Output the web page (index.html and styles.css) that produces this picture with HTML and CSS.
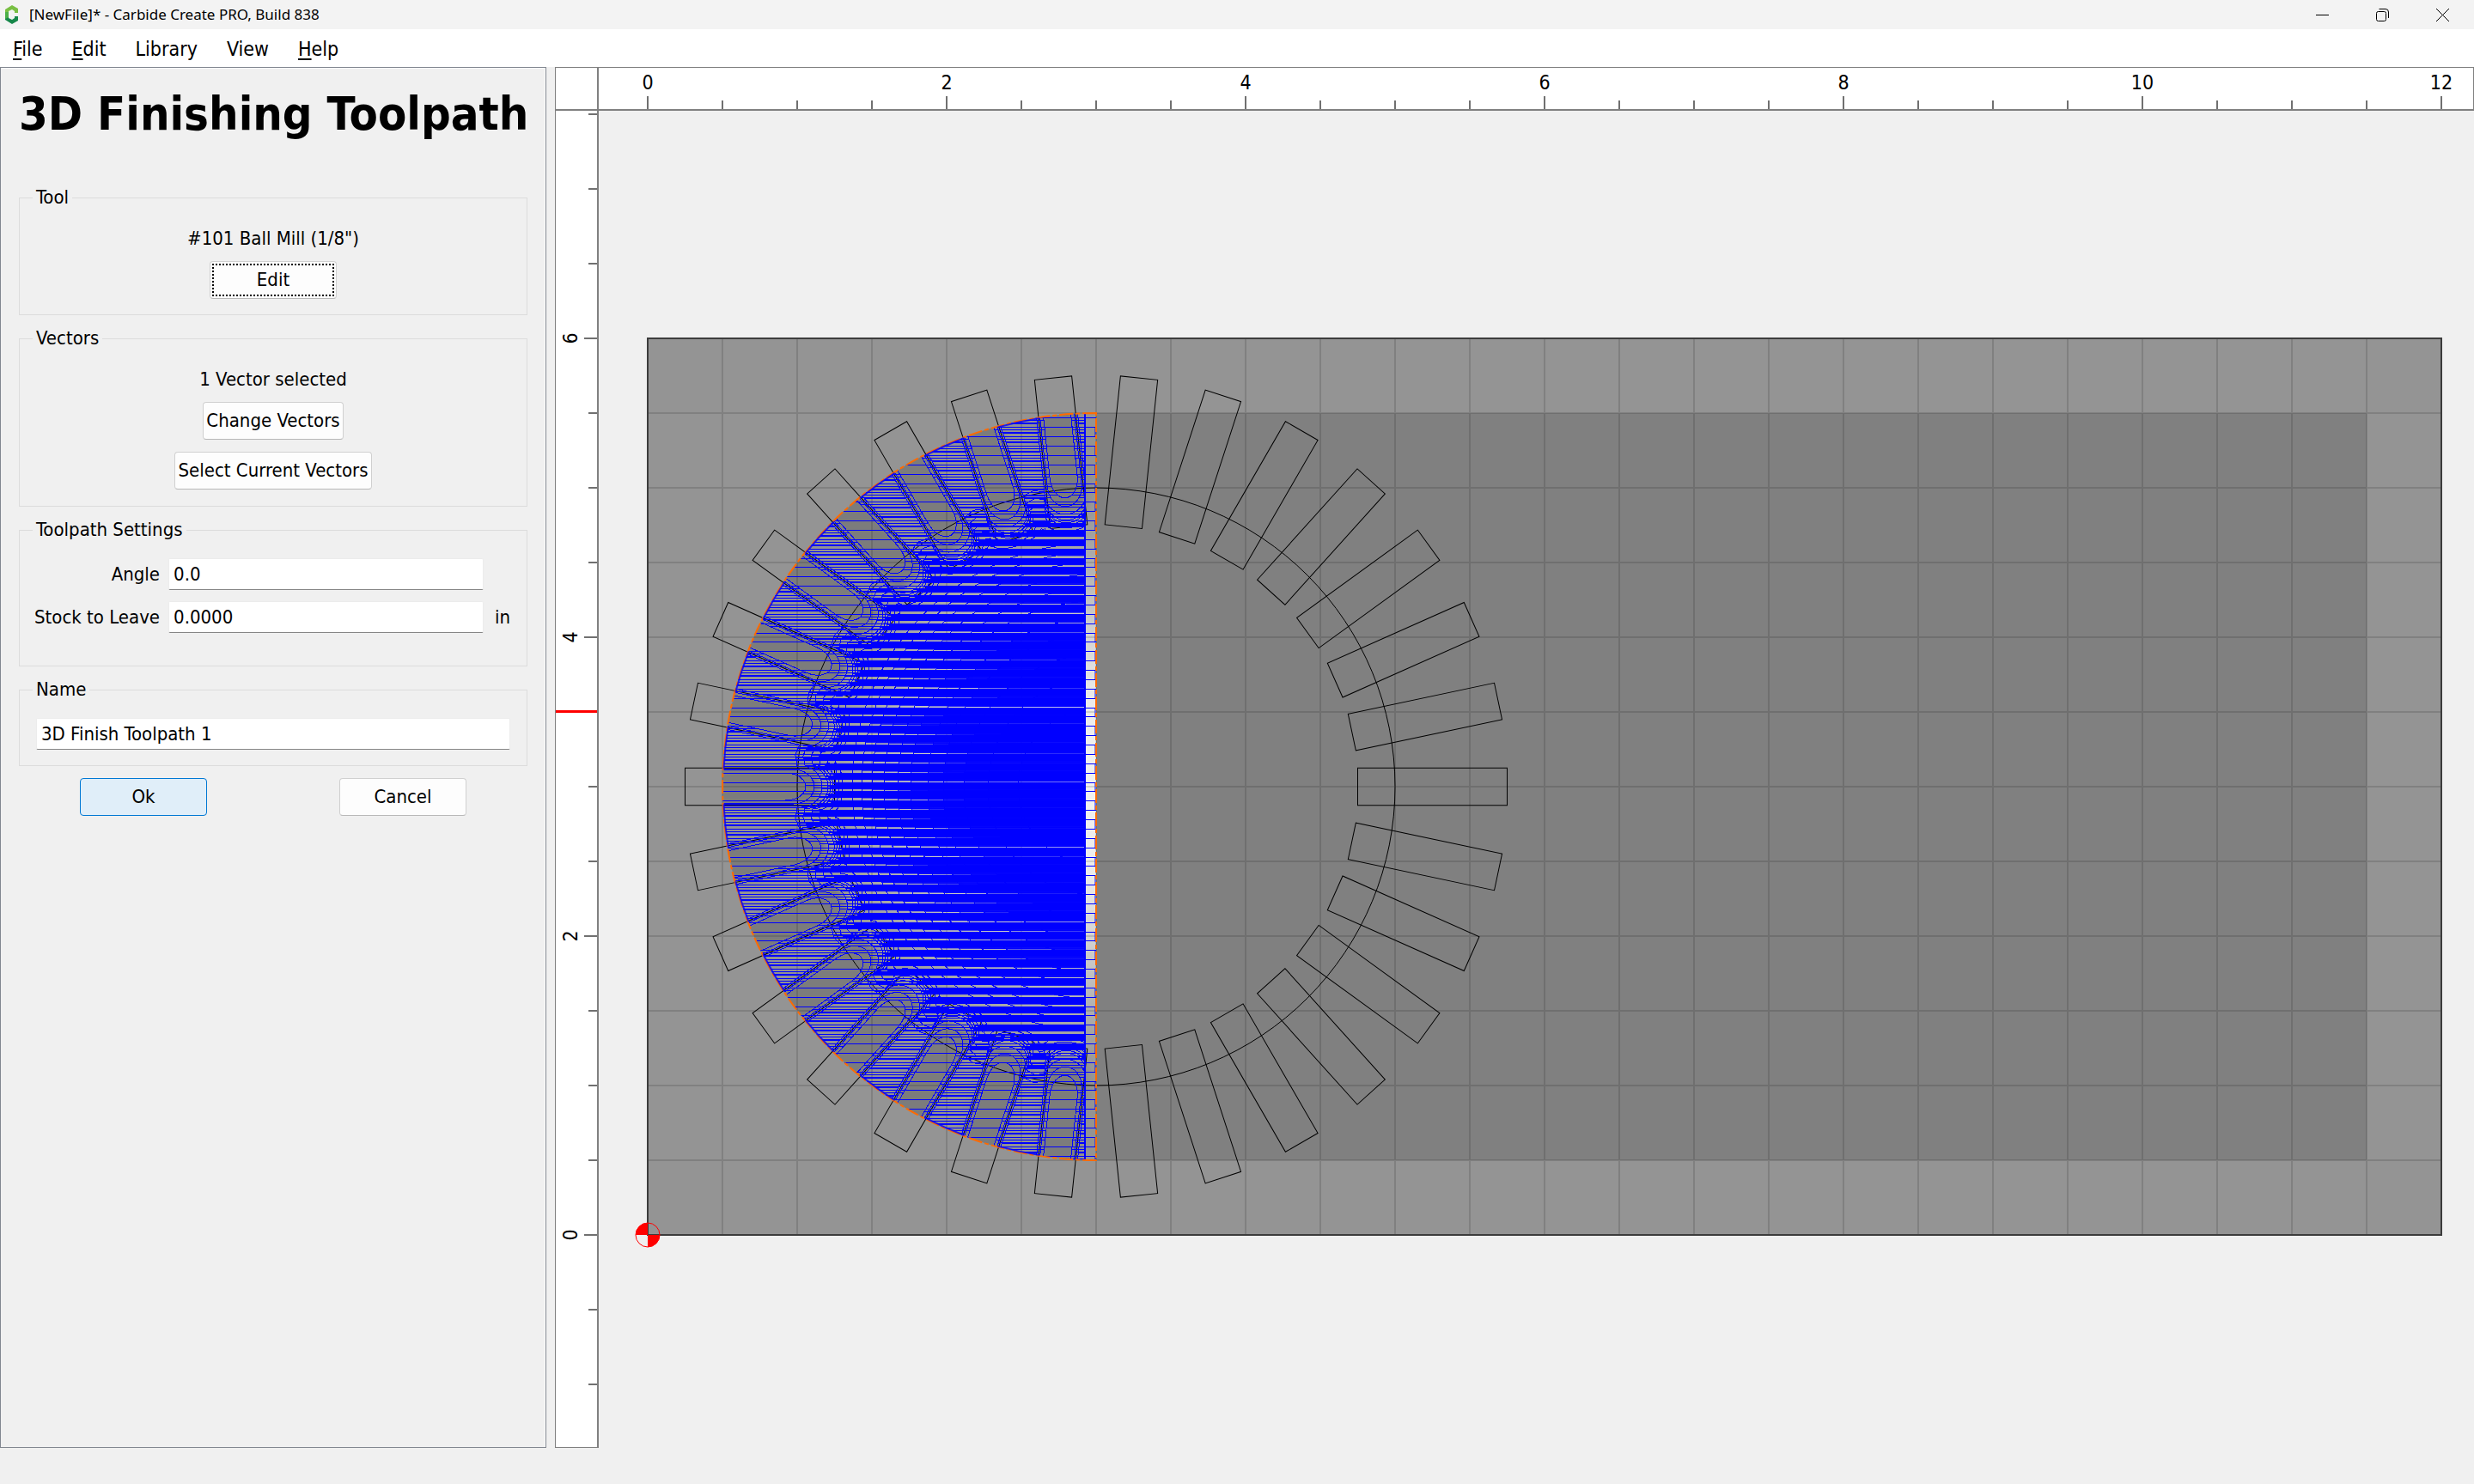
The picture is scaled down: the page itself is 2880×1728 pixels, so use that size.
FILE: index.html
```html
<!DOCTYPE html>
<html lang="en">
<head>
<meta charset="utf-8">
<title>[NewFile]* - Carbide Create PRO, Build 838</title>
<link rel="stylesheet" href="styles.css">
</head>
<body>
<div class="app">
  <header class="titlebar">
    <svg class="logo" width="18" height="26" viewBox="0 0 18 26" aria-hidden="true">
      <path d="M1 7 9 2l7 4v5h-4V9L9 7 5 9v5H1z" fill="#79bf43"/>
      <path d="M1 12h4v5l4 2 3-2v-2h4v5l-7 4-8-5z" fill="#16874a"/>
      <path d="M1 10h4v6l-4 2z" fill="#4caf48"/>
    </svg>
    <span class="title">[NewFile]* - Carbide Create PRO, Build 838</span>
    <div class="window-controls">
      <button class="window-btn" aria-label="Minimize"><svg width="17" height="17"><path d="M1 8.5h15" /></svg></button>
      <button class="window-btn" aria-label="Restore"><svg width="17" height="17"><rect x="1.500" y="4.500" width="11" height="11" rx="2"/><path d="M4.500 1.500H12a3.500 3.500 0 0 1 3.500 3.500v7"/></svg></button>
      <button class="window-btn" aria-label="Close"><svg width="17" height="17"><path d="M1 1l15 15M16 1 1 16"/></svg></button>
    </div>
  </header>

  <nav class="menubar">
    <a class="menu" href="#"><u>F</u>ile</a>
    <a class="menu" href="#"><u>E</u>dit</a>
    <a class="menu" href="#">Library</a>
    <a class="menu" href="#">View</a>
    <a class="menu" href="#"><u>H</u>elp</a>
  </nav>

  <main class="workspace">
    <form class="panel">
      <h1 class="heading">3D Finishing Toolpath</h1>

      <fieldset class="group tool">
        <legend>Tool</legend>
        <p class="note">#101 Ball Mill (1/8")</p>
        <button type="button" class="btn focused">Edit</button>
      </fieldset>

      <fieldset class="group vectors">
        <legend>Vectors</legend>
        <p class="note">1 Vector selected</p>
        <button type="button" class="btn snug">Change Vectors</button>
        <button type="button" class="btn snug">Select Current Vectors</button>
      </fieldset>

      <fieldset class="group settings">
        <legend>Toolpath Settings</legend>
        <div class="fields">
          <label for="angle">Angle</label>
          <input id="angle" class="field" type="text" value="0.0">
          <span></span>
          <label for="stock">Stock to Leave</label>
          <input id="stock" class="field" type="text" value="0.0000">
          <span class="unit">in</span>
        </div>
      </fieldset>

      <fieldset class="group name">
        <legend>Name</legend>
        <input class="field" type="text" value="3D Finish Toolpath 1" aria-label="Name">
      </fieldset>

      <div class="actions">
        <button type="button" class="btn primary">Ok</button>
        <button type="button" class="btn">Cancel</button>
      </div>
    </form>

    <section class="design">
      <div class="corner"></div>
      <svg class="ruler-x" id="ruler-x"></svg>
      <svg class="ruler-y" id="ruler-y"></svg>
      <svg class="stage" id="stage"></svg>
    </section>
  </main>
  <footer class="statusbar"></footer>
</div>
<script src="design.js"></script>
</body>
</html>
```
FILE: styles.css
```css
* { box-sizing: border-box; }
body {
  margin: 0;
  background: #f0f0f0;
  color: #000;
  font: 22px/26px "DejaVu Sans Condensed", "DejaVu Sans", sans-serif;
}
.app { display: flex; flex-direction: column; height: 100vh; }

.titlebar {
  display: flex;
  align-items: center;
  height: 34px;
  padding: 0 2px 0 5px;
  background: #f3f3f3;
  font: 17px/24px "Noto Sans", sans-serif;
}
.title { flex: 1; padding-left: 11px; }
.window-controls { display: flex; }
.window-btn {
  display: grid;
  place-items: center;
  width: 70px;
  height: 34px;
  padding: 0;
  border: 0;
  background: none;
}
.window-btn svg { fill: none; stroke: #000; stroke-width: 1; }

.menubar {
  display: flex;
  align-items: center;
  gap: 34px;
  height: 44px;
  padding: 2px 0 0 15px;
  background: #fff;
  font-size: 23px;
}
.menu { color: #000; text-decoration: none; }
.menu u { text-decoration-thickness: 2px; text-underline-offset: 3px; }

.workspace { display: flex; flex: 1; gap: 10px; min-height: 0; }
.statusbar { height: 42px; }

.panel {
  display: flex;
  flex-direction: column;
  width: 636px;
  padding: 0 21px;
  border: 1px solid #828790;
  box-shadow: inset -1px 1px #fff;
}
.heading {
  margin: 21px 0 51px;
  font-size: 54px;
  line-height: 66px;
  font-weight: bold;
  white-space: nowrap;
}
.group {
  display: flex;
  flex-direction: column;
  align-items: center;
  margin: 0 0 14px;
  padding: 0 19px;
  border: 1px solid #dcdcdc;
  min-width: 0;
}
.group legend { margin-left: -4px; padding: 0 4px; }
.note { margin: 0 0 13px; }
.tool { height: 150px; padding-top: 22px; }
.vectors { height: 209px; padding-top: 22px; }
.vectors .btn { margin-bottom: 14px; }
.settings { height: 172px; padding-top: 20px; }
.name { height: 102px; padding-top: 20px; }

.btn {
  width: 148px;
  height: 44px;
  padding: 0;
  border: 1px solid #d0d0d0;
  border-bottom-color: #b8b8b8;
  border-radius: 4px;
  background: #fdfdfd;
  color: #000;
  font: inherit;
}
.snug { width: auto; padding: 0 3px; }
.focused { outline: 2px dotted #000; outline-offset: -5px; }
.primary { border-color: #0078d4; background: #e0eef9; }

.fields {
  display: grid;
  grid-template-columns: auto 1fr auto;
  gap: 13px 8px;
  width: 100%;
  align-items: center;
}
.fields label { padding-right: 2px; margin-left: -2px; text-align: right; }
.unit { padding-left: 5px; }
.field {
  width: 100%;
  height: 37px;
  padding: 0 5px;
  border: 1px solid #ececec;
  border-bottom: 1px solid #868686;
  border-radius: 2px;
  background: #fff;
  color: #000;
  font: inherit;
}
.actions { display: flex; justify-content: space-between; padding: 0 71px; }

.design {
  display: grid;
  flex: 1;
  grid-template: 51px 1fr / 51px 1fr;
  min-width: 0;
}
.design svg { display: block; width: 100%; height: 100%; overflow: hidden; }
.corner, .ruler-x, .ruler-y { background: #fff; }
.corner { border: 1px solid #808080; border-width: 1px 2px 2px 1px; }
.ruler-x { border: 1px solid #808080; border-width: 1px 1px 2px 0; }
.ruler-y { border: 1px solid #808080; border-width: 0 2px 1px 1px; }
.ruler-x, .ruler-y { font-size: 23px; text-anchor: middle; }
.tick { stroke: #707070; stroke-width: 2; }
.cursor { stroke: #f00; stroke-width: 3; }

.outline { fill: none; stroke: #3c3c3c; stroke-width: 2; }
.grid { fill: none; stroke: #000; stroke-opacity: 0.13; stroke-width: 2; }
.vector { fill: none; stroke: #000; stroke-width: 1; }
.boundary { fill: none; stroke: #ff6a00; stroke-width: 2; stroke-dasharray: 16 3 5 3; }
.path { fill: none; stroke: #00f; stroke-width: 1; }
.ring { shape-rendering: crispEdges; }
.edge { stroke-width: 2; }
```
FILE: design.js
```javascript
const NS = 'http://www.w3.org/2000/svg';
const INCH = 174;

function add(parent, tag, attrs, text) {
  const el = document.createElementNS(NS, tag);
  for (const key in attrs) el.setAttribute(key, attrs[key]);
  if (text !== undefined) el.textContent = text;
  parent.appendChild(el);
  return el;
}

/* Stage position of the stock's lower left corner. */
const OX = 57, OY = 1309;

/* Rulers: a tick every half inch, a label every two inches. */
const rx = document.getElementById('ruler-x');
for (let i = 0; i <= 24; i++) {
  const x = OX + i * INCH / 2;
  const major = i % 4 === 0;
  add(rx, 'path', { class: 'tick', d: `M${x} ${major ? 33 : 38}V50` });
  if (major) add(rx, 'text', { x: x, y: 25 }, i / 2);
}
const ry = document.getElementById('ruler-y');
for (let i = -2; i <= 15; i++) {
  const y = OY - i * INCH / 2;
  const major = i % 4 === 0;
  add(ry, 'path', { class: 'tick', d: `M${major ? 33 : 38} ${y}H50` });
  if (major) add(ry, 'text', { transform: `translate(25 ${y}) rotate(-90)` }, i / 2);
}
add(ry, 'path', { class: 'cursor', d: 'M0 699.500H52' });

/* Stock, model and vectors, in stage pixels. */
const stage = document.getElementById('stage');
const CX = OX + 3 * INCH, CY = OY - 3 * INCH;
const R = 2.5 * INCH;
const defs = add(stage, 'defs', {});
const shade = add(defs, 'radialGradient', { id: 'dome', gradientUnits: 'userSpaceOnUse', cx: CX, cy: CY, r: 2 * INCH });
[[0, '#f2f2f2'], [0.3, '#ebebeb'], [0.5, '#d4d4d4'], [0.85, '#a0a0a0'], [1, '#939393']]
  .forEach(([o, c]) => add(shade, 'stop', { offset: o, 'stop-color': c }));
const soft = add(defs, 'filter', { id: 'soft' });
add(soft, 'feGaussianBlur', { stdDeviation: 4 });
const half = `M${CX} ${CY - R}A${R} ${R} 0 0 0 ${CX} ${CY + R}Z`;
add(add(defs, 'clipPath', { id: 'half' }), 'path', { d: half });

add(stage, 'rect', { x: OX, y: OY - 6 * INCH, width: 12 * INCH, height: 6 * INCH, fill: '#949494' });
add(stage, 'rect', { x: CX, y: CY - R, width: 8.5 * INCH, height: 2 * R, fill: '#808080' });
const relief = add(stage, 'g', { 'clip-path': 'url(#half)' });
add(relief, 'circle', { cx: CX, cy: CY, r: R, fill: 'url(#dome)' });
const slots = add(relief, 'g', { fill: '#7c7c7c', filter: 'url(#soft)' });

let grid = '';
for (let i = 1; i < 24; i++) grid += `M${OX + i * 87} ${OY}v${-6 * INCH}`;
for (let i = 1; i < 12; i++) grid += `M${OX} ${OY - i * 87}h${12 * INCH}`;
add(stage, 'path', { class: 'grid', d: grid });
add(stage, 'rect', { class: 'outline', x: OX, y: OY - 6 * INCH, width: 12 * INCH, height: 6 * INCH });

/* The ring of thirty quarter-inch slots. */
for (let a = 0; a < 360; a += 12) {
  const box = { x: CX + 1.75 * INCH, y: CY - INCH / 8, width: INCH, height: INCH / 4, transform: `rotate(${a} ${CX} ${CY})` };
  add(slots, 'rect', { ...box, x: CX + 1.85 * INCH });
  add(stage, 'rect', { class: 'vector', ...box });
}
add(stage, 'circle', { class: 'vector', cx: CX, cy: CY, r: 2 * INCH });

/* Toolpath levels: radius on a slot's axis, radius between slots,
   half width of the channel, and the offset of that level's passes. */
const levels = [
  [338, 450, 16, 3], [328, 450, 20, 6], [319, 450, 24, 7],
  [312, 352, 24, 4], [309, 343, 25, 5], [306, 334, 26, 1],
  [303, 325, 27, 2], [299, 316, 28, 5], [295, 307, 28, 4],
  [284, 284, 0, 2], [273, 273, 0, 7.5], [261, 261, 0, 8],
  [247, 247, 0, 8.4], [231, 231, 0, 8.8], [216, 216, 0, 9.2],
  [196, 196, 0, 9.5], [178, 178, 0, 9.8], [154, 154, 0, 10], [126, 126, 0, 9], [91, 91, 0, 9.6]
];
const SNAPPED = 10;
const PASS = INCH / 16;
const END = CX - 13;
add(add(defs, 'clipPath', { id: 'cut' }), 'rect', { x: 0, y: 0, width: END, height: 2000 });
const tool = add(stage, 'g', { 'clip-path': 'url(#half)' });
const rings = add(tool, 'g', { 'clip-path': 'url(#cut)' });

function contour([inner, outer, w]) {
  const pts = [];
  for (let a = 84; a <= 276; a += 12) {
    const t = a * Math.PI / 180;
    const put = (u, v) => pts.push([CX + u * Math.cos(t) - v * Math.sin(t), CY - u * Math.sin(t) - v * Math.cos(t)]);
    const polar = (r, deg) => put(r * Math.cos(deg * Math.PI / 180), r * Math.sin(deg * Math.PI / 180));
    if (!w) {
      for (let d = -6; d < 6; d += 2) polar(inner, d);
      continue;
    }
    polar(outer, -6);
    put(outer - 4, -w);
    const depth = Math.min(24, outer - inner - 2);
    for (let s = -90; s <= 90; s += 15) {
      const q = s * Math.PI / 180;
      put(inner + depth * (1 - Math.cos(q)), w * Math.sin(q));
    }
    put(outer - 4, w);
  }
  return pts;
}

function scan(pts, y) {
  const xs = [];
  for (let i = 0; i < pts.length; i++) {
    const [x1, y1] = pts[i], [x2, y2] = pts[(i + 1) % pts.length];
    if ((y1 <= y) !== (y2 <= y)) xs.push(x1 + (x2 - x1) * (y - y1) / (y2 - y1));
  }
  return xs.sort((p, q) => p - q);
}

let passes = '';
const rows = 80;
for (let j = 0; j < rows; j++) {
  const y = Math.round(CY + (j - rows / 2 + 0.5) * PASS) + 0.5;
  passes += `M${CX - R} ${y}H${CX}`;
  if (j % 2) passes += `M${CX - 1} ${y}v${PASS}`;
}
levels.forEach((level, k) => {
  const pts = contour(level);
  let d = '';
  pts.forEach(([x, y], i) => { d += (i ? 'L' : 'M') + x.toFixed(1) + ' ' + y.toFixed(1); });
  add(rings, 'path', { class: 'path ring', d: d });
  for (let j = 0; j < rows; j++) {
    const row = CY + (j - rows / 2 + 0.5) * PASS;
    const y = k < SNAPPED ? Math.round(row) + level[3] + 0.5 : row + level[3] + (j * 7 % 5) * 0.2;
    const xs = scan(pts, y);
    for (let i = 0; i + 1 < xs.length; i += 2) {
      const a = Math.min(xs[i], END), b = Math.min(xs[i + 1], END);
      if (b > a) passes += `M${a.toFixed(1)} ${y.toFixed(1)}H${b.toFixed(1)}`;
    }
  }
});
add(tool, 'path', { class: 'path', d: passes });
add(tool, 'path', { class: 'path edge', d: `M${END} ${CY - R}v${2 * R}` });

/* Selected boundary, with the cut rim laid over it between the slots. */
add(stage, 'path', { class: 'boundary', d: half });
let rim = '';
for (let a = 96; a < 264; a += 12) {
  const at = deg => `${CX + (R - 1) * Math.cos(deg * Math.PI / 180)} ${CY - (R - 1) * Math.sin(deg * Math.PI / 180)}`;
  rim += `M${at(a + 2.7)}A${R - 1} ${R - 1} 0 0 0 ${at(a + 9.3)}`;
}
add(stage, 'path', { class: 'path edge', d: rim, 'stroke-opacity': 0.8 });

/* Origin marker. */
add(stage, 'path', { d: `M${OX} ${OY}V${OY - 14}A14 14 0 0 0 ${OX - 14} ${OY}ZM${OX} ${OY}V${OY + 14}A14 14 0 0 0 ${OX + 14} ${OY}Z`, fill: '#f00' });
add(stage, 'circle', { cx: OX, cy: OY, r: 14, fill: 'none', stroke: '#f00' });
```
